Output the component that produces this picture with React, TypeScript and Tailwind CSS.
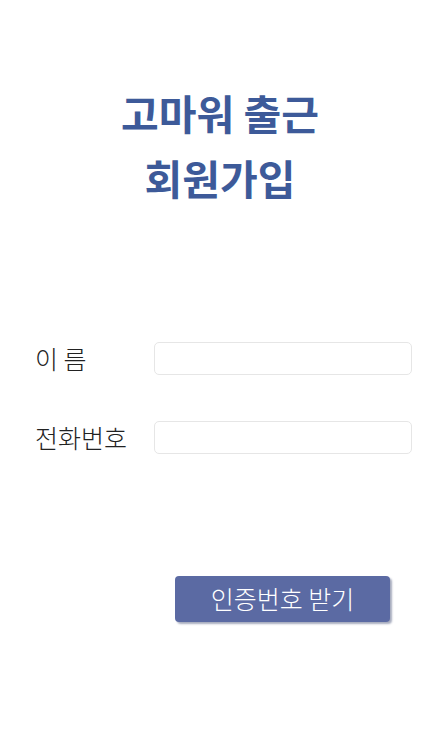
import * as React from "react";

const FONT = { fontFamily: '"Noto Sans CJK KR", "Noto Sans", sans-serif' };

function Field({ label, id }: { label: string; id: string }) {
  return (
    <div className="flex items-center">
      <label htmlFor={id} className="w-[119px] shrink-0 text-[25px] font-light text-[#222] leading-none">
        {label}
      </label>
      <input
        id={id}
        type="text"
        className="h-[33px] w-[258px] rounded-[5px] border border-[#e6e6e6] bg-white px-2 text-[16px] outline-none"
      />
    </div>
  );
}

export default function App() {
  return (
    <div className="flex min-h-[750px] w-full flex-col bg-white" style={FONT}>
      <h1 className="mt-[90px] flex flex-col items-center gap-[20px] pl-[18px] text-[41px] font-semibold leading-[45px] text-[#3d5a99]">
        <span>고마워 출근</span>
        <span>회원가입</span>
      </h1>

      <div className="mt-[142px] flex flex-col gap-[46px] pl-[35px]">
        <Field label="이 름" id="name" />
        <Field label="전화번호" id="phone" />
      </div>

      <div className="mt-[122px] flex pl-[175px]">
        <button
          type="button"
          className="h-[46px] w-[215px] rounded-[4px] bg-[#5b6aa3] text-[25px] font-light text-white shadow-[2px_2px_2px_rgba(60,70,110,0.45)]"
        >
          인증번호 받기
        </button>
      </div>
    </div>
  );
}
